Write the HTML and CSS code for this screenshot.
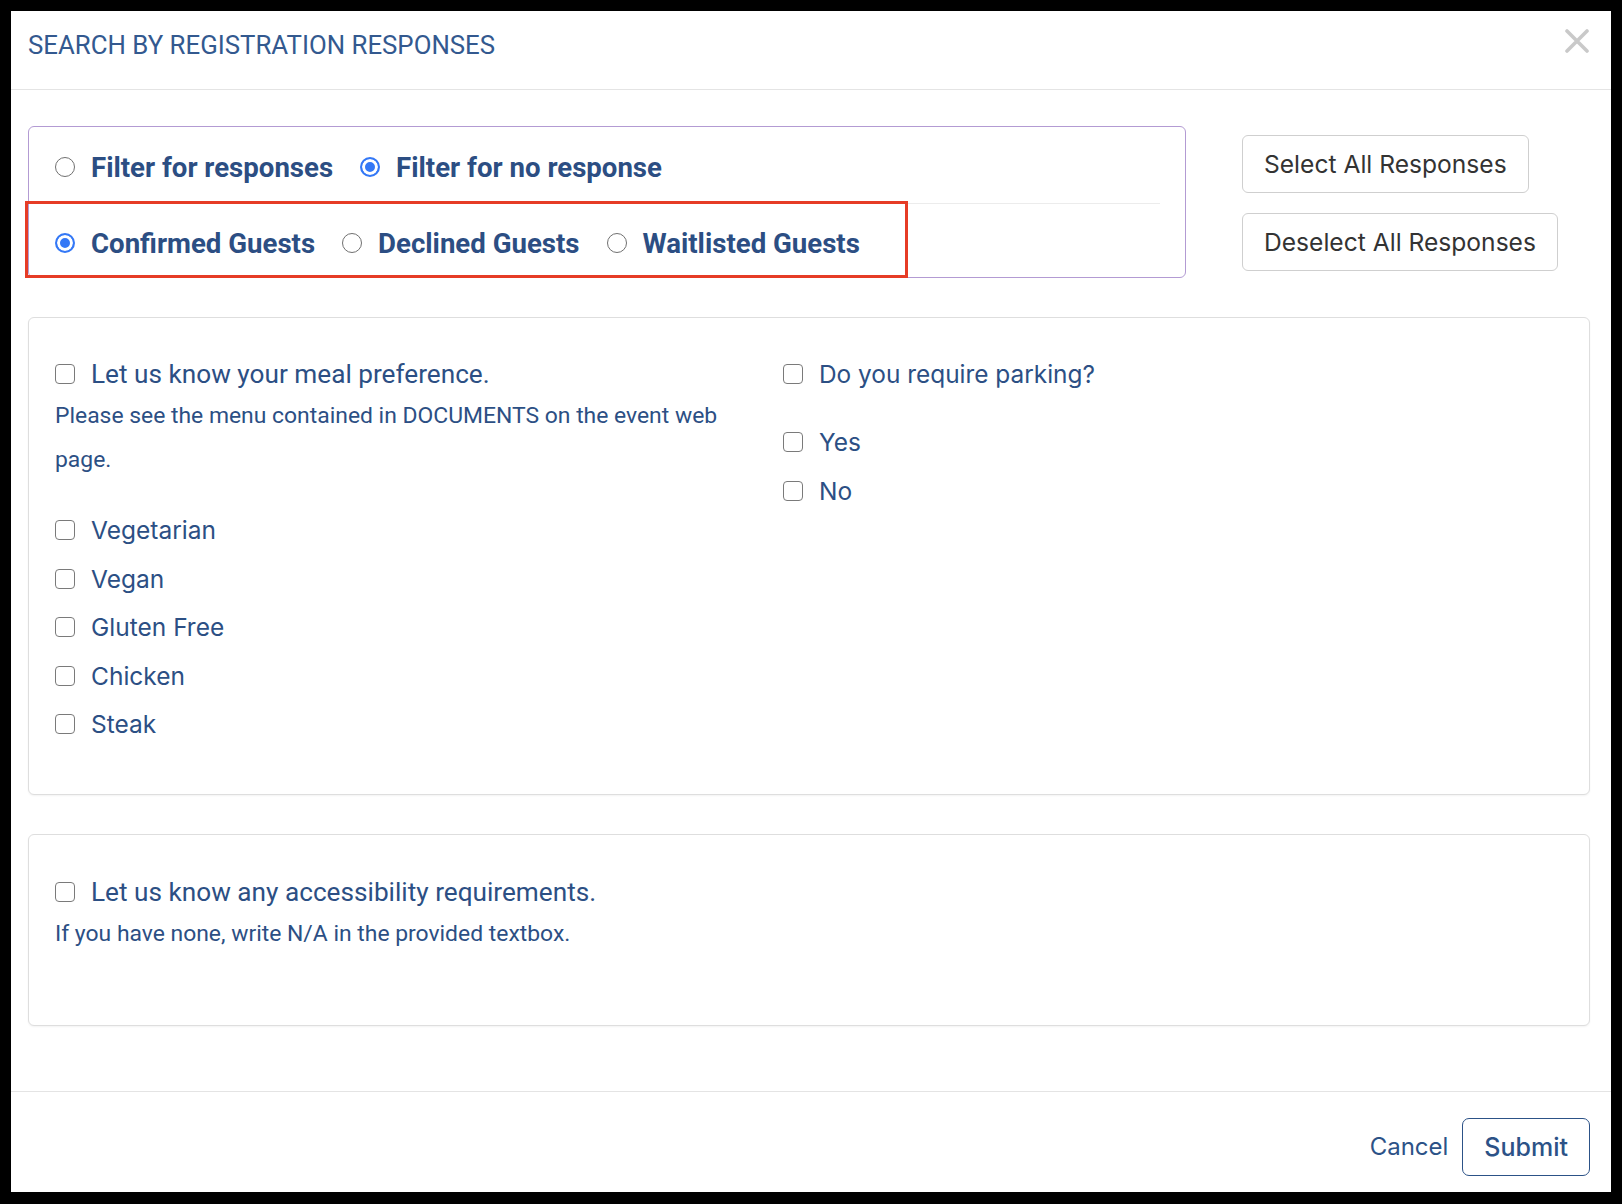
FILE: index.html
```html
<!DOCTYPE html>
<html lang="en">
<head>
<meta charset="utf-8">
<title>Search by registration responses</title>
<link rel="stylesheet" href="styles.css">
</head>
<body>
<div class="modal" role="dialog" aria-labelledby="modal-title">
  <header class="modal-header">
    <h1 class="modal-title" id="modal-title">SEARCH BY REGISTRATION RESPONSES</h1>
    <button class="close-btn" type="button" aria-label="Close">
      <svg width="24" height="24" viewBox="0 0 24 24" aria-hidden="true">
        <path d="M2 2 L22 22 M22 2 L2 22" stroke="#c9c9c9" stroke-width="3.6" stroke-linecap="round" fill="none"/>
      </svg>
    </button>
  </header>

  <div class="modal-body">
    <div class="filter-row">
      <div class="filter-box">
        <div class="radio-row radio-row-top">
          <label class="radio"><input type="radio" name="mode"><span>Filter for responses</span></label>
          <label class="radio"><input type="radio" name="mode" checked><span>Filter for no response</span></label>
        </div>
        <div class="filter-divider"></div>
        <div class="radio-row radio-row-bottom">
          <label class="radio"><input type="radio" name="guests" checked><span>Confirmed Guests</span></label>
          <label class="radio"><input type="radio" name="guests"><span>Declined Guests</span></label>
          <label class="radio"><input type="radio" name="guests"><span>Waitlisted Guests</span></label>
        </div>
        <div class="highlight"></div>
      </div>
      <div class="bulk-actions">
        <button class="btn-outline" type="button">Select All Responses</button>
        <button class="btn-outline" type="button">Deselect All Responses</button>
      </div>
    </div>

    <section class="panel panel-meal">
      <div class="question">
        <label class="check question-label"><input type="checkbox"><span>Let us know your meal preference.</span></label>
        <p class="question-desc">Please see the menu contained in DOCUMENTS on the event web page.</p>
        <div class="options">
          <label class="check option"><input type="checkbox"><span>Vegetarian</span></label>
          <label class="check option"><input type="checkbox"><span>Vegan</span></label>
          <label class="check option"><input type="checkbox"><span>Gluten Free</span></label>
          <label class="check option"><input type="checkbox"><span>Chicken</span></label>
          <label class="check option"><input type="checkbox"><span>Steak</span></label>
        </div>
      </div>
      <div class="question">
        <label class="check question-label option-font"><input type="checkbox"><span>Do you require parking?</span></label>
        <div class="options">
          <label class="check option"><input type="checkbox"><span>Yes</span></label>
          <label class="check option"><input type="checkbox"><span>No</span></label>
        </div>
      </div>
    </section>

    <section class="panel panel-access">
      <div class="question">
        <label class="check question-label"><input type="checkbox"><span>Let us know any accessibility requirements.</span></label>
        <p class="question-desc">If you have none, write N/A in the provided textbox.</p>
      </div>
    </section>
  </div>

  <footer class="modal-footer">
    <button class="btn-link" type="button">Cancel</button>
    <button class="btn-submit" type="button">Submit</button>
  </footer>
</div>
</body>
</html>
```

FILE: styles.css
```css
* {
  box-sizing: border-box;
}

html, body {
  margin: 0;
  background: #000;
}

body {
  padding: 11px;
  font-family: Inter, "Noto Sans", sans-serif;
  color: #2c4f84;
}

.modal {
  width: 1600px;
  height: 1181px;
  background: #fff;
  display: flex;
  flex-direction: column;
}

/* header */
.modal-header {
  height: 79px;
  padding: 19px 22px 0 17px;
  border-bottom: 1px solid #e4e4e4;
  display: flex;
  justify-content: space-between;
  align-items: flex-start;
}

.modal-title {
  margin: 0;
  font-family: Roboto, "Liberation Sans", sans-serif;
  font-weight: 400;
  font-size: 25.8px;
  line-height: 30px;
  color: #33598f;
  letter-spacing: 0;
}

.close-btn {
  margin-top: -1px;
  padding: 0;
  border: 0;
  background: none;
  width: 24px;
  height: 24px;
  display: block;
}

.close-btn svg {
  display: block;
}

/* body */
.modal-body {
  height: 1001px;
  padding: 36px 21px 0 17px;
  display: flex;
  flex-direction: column;
  gap: 39px;
}

.filter-row {
  display: flex;
  gap: 56px;
  align-items: flex-start;
}

.filter-box {
  position: relative;
  width: 1158px;
  height: 152px;
  border: 1px solid #b39bd3;
  border-radius: 6px;
}

.radio-row {
  display: flex;
  align-items: center;
  gap: 27px;
  padding-left: 26px;
}

.radio-row-top {
  height: 76px;
  padding-top: 4px;
}

.radio-row-bottom {
  height: 73px;
  padding-top: 5px;
}

.filter-divider {
  height: 1px;
  margin: 0 25px;
  background: #ececec;
}

.radio {
  display: flex;
  align-items: center;
  gap: 16px;
  font-family: Roboto, "Liberation Sans", sans-serif;
  font-weight: 700;
  font-size: 27.6px;
  color: #2c4e83;
  white-space: nowrap;
}

.radio input {
  appearance: none;
  -webkit-appearance: none;
  margin: 0;
  width: 20px;
  height: 20px;
  border-radius: 50%;
  border: 1.2px solid #707070;
  background: #fff;
  flex-shrink: 0;
}

.radio input:checked {
  border: 2px solid #3478f6;
  background: #3478f6;
  box-shadow: inset 0 0 0 3px #fff;
}

/* annotation frame over the guest-status row */
.highlight {
  position: absolute;
  left: -4px;
  top: 74px;
  width: 883px;
  height: 77px;
  border: 3px solid #e63c26;
  pointer-events: none;
}

.bulk-actions {
  margin-top: 9px;
  display: flex;
  flex-direction: column;
  align-items: flex-start;
  gap: 20px;
}

.btn-outline {
  height: 58px;
  padding: 0 21px;
  border: 1px solid #cfcfcf;
  border-radius: 6px;
  background: #fff;
  font-family: Inter, "Noto Sans", sans-serif;
  font-size: 24.6px;
  color: #333;
  white-space: nowrap;
}

/* question panels */
.panel {
  border: 1px solid #dedede;
  border-radius: 6px;
  background: #fff;
  box-shadow: 0 1px 2px rgba(0, 0, 0, 0.05);
  padding: 36px 26px 0 26px;
}

.panel-meal {
  height: 478px;
  display: grid;
  grid-template-columns: 728px 1fr;
}

.panel-access {
  height: 192px;
  padding-top: 37px;
}

.check {
  display: flex;
  align-items: center;
  gap: 16px;
  white-space: nowrap;
}

.check input {
  appearance: none;
  -webkit-appearance: none;
  margin: 0;
  width: 20px;
  height: 20px;
  border: 1.5px solid #7a7a7a;
  border-radius: 4px;
  background: #fff;
  flex-shrink: 0;
}

.question-label {
  height: 40px;
  font-family: Roboto, "Liberation Sans", sans-serif;
  font-size: 26.2px;
  color: #2c4f84;
}

.question-label.option-font {
  font-family: Inter, "Noto Sans", sans-serif;
  font-size: 24.4px;
}

.question-desc {
  margin: 0;
  max-width: 695px;
  font-family: Roboto, "Liberation Sans", sans-serif;
  font-size: 22.9px;
  line-height: 44px;
  color: #2c4f84;
}

.options {
  margin-top: 24px;
  display: flex;
  flex-direction: column;
}

.option {
  height: 48.5px;
  font-family: Inter, "Noto Sans", sans-serif;
  font-size: 24.5px;
  color: #2c4f84;
}

/* footer */
.modal-footer {
  flex: 1;
  border-top: 1px solid #e4e4e4;
  padding: 9px 21px 0 0;
  display: flex;
  justify-content: flex-end;
  align-items: center;
  gap: 14px;
}

.btn-link {
  padding: 0;
  border: 0;
  background: none;
  font-family: Inter, "Noto Sans", sans-serif;
  font-size: 24px;
  color: #2c5287;
}

.btn-submit {
  height: 58px;
  padding: 0 21px;
  border: 1px solid #2c5287;
  border-radius: 7px;
  background: #fff;
  font-family: Inter, "Noto Sans", sans-serif;
  font-weight: 500;
  font-size: 25px;
  color: #2c5287;
}
```
